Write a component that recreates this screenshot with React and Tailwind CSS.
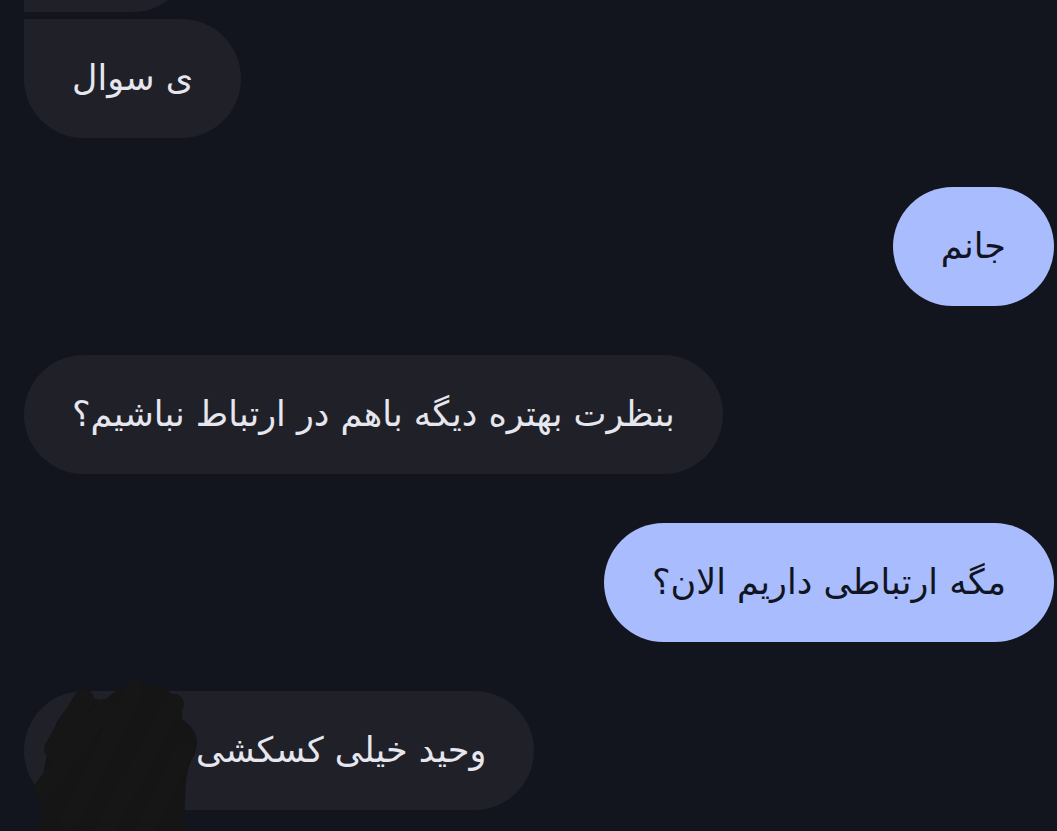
const MESSAGES = [
  { id: 1, mine: false, text: 'سلام', corner: 'rounded-bl-[12px]', hidden: true },
  { id: 2, mine: false, text: 'ی سوال', corner: 'rounded-tl-[12px]', gap: 'mt-[7px]' },
  { id: 3, mine: true, text: 'جانم', gap: 'mt-[49px]' },
  { id: 4, mine: false, text: 'بنظرت بهتره دیگه باهم در ارتباط نباشیم؟', gap: 'mt-[49px]' },
  { id: 5, mine: true, text: 'مگه ارتباطی داریم الان؟', gap: 'mt-[49px]' },
  { id: 6, mine: false, text: 'وحید خیلی کسکشی', gap: 'mt-[49px]', scribble: true },
];

// marker scribble drawn over the start of a bubble
function Scribble() {
  return (
    <svg className="absolute left-[10px] top-[-12px] h-[152px] w-[170px]" viewBox="0 0 170 152">
      <path
        d="M8 152 C4 120 10 80 20 50 C30 25 50 14 70 22 C85 6 105 0 125 8 C140 12 150 26 148 40 C162 50 168 62 158 80 C150 95 152 115 150 152 Z"
        fill="#151516"
      />
      <path
        d="M20 70 L50 20 M35 140 L100 10 M70 152 L140 25 M110 152 L150 70 M10 110 L70 30"
        stroke="#161617"
        strokeWidth="20"
        strokeLinecap="round"
      />
    </svg>
  );
}

function Bubble({ msg }) {
  const tone = msg.mine ? 'bg-[#a9bcfd] text-[#111522]' : 'bg-[#1f2028] text-[#e6e6ee]';
  const pad = msg.scribble ? 'pl-[172px] pr-12' : 'px-12';
  return (
    <div className={`relative ${msg.gap || ''} ${msg.mine ? 'self-end' : 'self-start'}`}>
      <div className={`flex h-[119px] items-center rounded-full ${pad} ${tone} ${msg.corner || ''}`}>
        <span dir="rtl" className={`whitespace-nowrap text-[35px] leading-none ${msg.hidden ? 'invisible' : ''}`}>
          {msg.text}
        </span>
      </div>
      {msg.scribble && <Scribble />}
    </div>
  );
}

export default function App() {
  return (
    <div
      className="h-[831px] w-[1057px] overflow-hidden bg-[#12151d]"
      style={{ fontFamily: '"DejaVu Sans", sans-serif' }}
    >
      <div className="mt-[-107px] flex flex-col pl-6 pr-[3px]">
        {MESSAGES.map((msg) => (
          <Bubble key={msg.id} msg={msg} />
        ))}
      </div>
    </div>
  );
}
